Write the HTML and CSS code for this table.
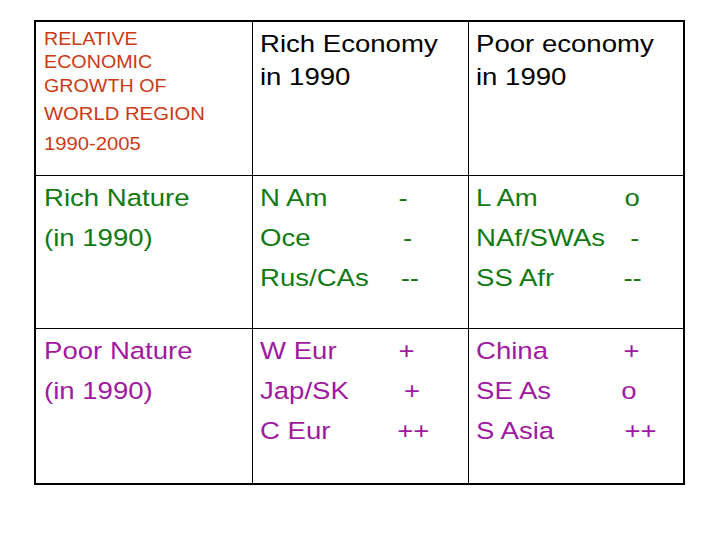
FILE: index.html
```html
<!DOCTYPE html>
<html>
<head>
<meta charset="utf-8">
<link rel="stylesheet" href="styles.css">
</head>
<body>
<div class="table">
  <div class="cell c1 top">
    <div class="content red">
      <div class="r1">RELATIVE</div>
      <div class="r1">ECONOMIC</div>
      <div class="r1">GROWTH OF</div>
      <div class="r2 first">WORLD REGION</div>
      <div class="r2">1990-2005</div>
    </div>
  </div>
  <div class="cell c2 top">
    <div class="content head">
      <div>Rich Economy</div>
      <div>in 1990</div>
    </div>
  </div>
  <div class="cell c3 top">
    <div class="content head">
      <div>Poor economy</div>
      <div>in 1990</div>
    </div>
  </div>

  <div class="cell c1 body">
    <div class="content green">
      <div class="line">Rich Nature</div>
      <div class="line">(in 1990)</div>
    </div>
  </div>
  <div class="cell c2 body">
    <div class="content green list">
      <div class="line"><span class="name">N Am</span><span class="sym m1">-</span></div>
      <div class="line"><span class="name">Oce</span><span class="sym m5">-</span></div>
      <div class="line"><span class="name">Rus/CAs</span><span class="sym m3">--</span></div>
    </div>
  </div>
  <div class="cell c3 body">
    <div class="content green list">
      <div class="line"><span class="name">L Am</span><span class="sym m3">o</span></div>
      <div class="line"><span class="name">NAf/SWAs</span><span class="sym m8">-</span></div>
      <div class="line"><span class="name">SS Afr</span><span class="sym m2">--</span></div>
    </div>
  </div>

  <div class="cell c1 body">
    <div class="content purple">
      <div class="line">Poor Nature</div>
      <div class="line">(in 1990)</div>
    </div>
  </div>
  <div class="cell c2 body">
    <div class="content purple list">
      <div class="line"><span class="name">W Eur</span><span class="sym m1">+</span></div>
      <div class="line"><span class="name">Jap/SK</span><span class="sym m6">+</span></div>
      <div class="line"><span class="name">C Eur</span><span class="sym m0">++</span></div>
    </div>
  </div>
  <div class="cell c3 body">
    <div class="content purple list">
      <div class="line"><span class="name">China</span><span class="sym m2">+</span></div>
      <div class="line"><span class="name">SE As</span><span class="sym m0">o</span></div>
      <div class="line"><span class="name">S Asia</span><span class="sym m3">++</span></div>
    </div>
  </div>
</div>
</body>
</html>
```

FILE: styles.css
```css
html, body {
  margin: 0;
  padding: 0;
  background: #ffffff;
}

body {
  font-family: "Liberation Sans", Arial, sans-serif;
  color: #000000;
}

.table {
  margin: 20px 0 0 34px;
  width: 647px;
  border: 2px solid #000000;
  background: #000000;
  display: grid;
  grid-template-columns: 216px 215px 214px;
  grid-template-rows: 153px 152px 154px;
  gap: 1px;
}

.cell {
  background: #ffffff;
  overflow: visible;
}

.c1 { padding-left: 8px; }
.c2 { padding-left: 7px; }
.c3 { padding-left: 7px; }

.top { padding-top: 4.5px; }
.body { padding-top: 2px; }

.content {
  transform: scaleX(1.125);
  transform-origin: 0 0;
  white-space: nowrap;
}

.red {
  color: #cc3a14;
  padding-top: 1px;
}

.r1 {
  font-size: 17.5px;
  line-height: 23.5px;
}

.r2 {
  font-size: 18px;
  line-height: 30px;
}

.r2.first {
  margin-top: 1px;
}

.head {
  font-size: 24.5px;
  line-height: 33px;
  padding-top: 0.5px;
}

.green {
  color: #127a12;
}

.purple {
  color: #a01aa0;
}

.line {
  font-size: 24.5px;
  line-height: 40px;
}

.list .line {
  display: flex;
}

.c2 .name {
  width: 122px;
  flex: none;
}

.c3 .name {
  width: 129px;
  flex: none;
}

.m0 { margin-left: 0; }
.m1 { margin-left: 1px; }
.m2 { margin-left: 2px; }
.m3 { margin-left: 3px; }
.m5 { margin-left: 5px; }
.m6 { margin-left: 6px; }
.m8 { margin-left: 8px; }
```
